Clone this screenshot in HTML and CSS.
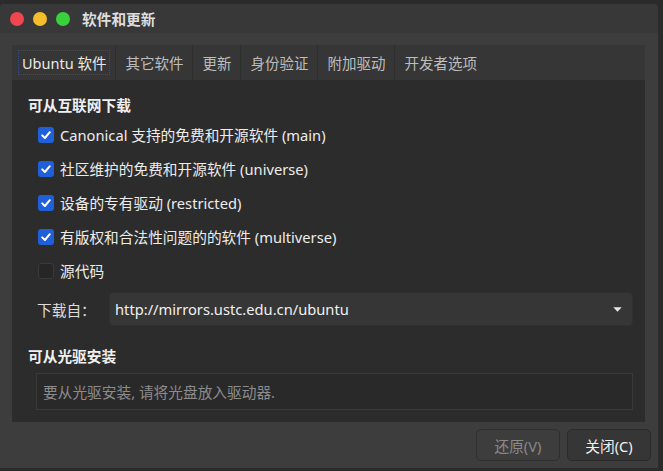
FILE: index.html
```html
<!DOCTYPE html>
<html lang="zh-CN">
<head>
<meta charset="utf-8">
<title>软件和更新</title>
<link rel="stylesheet" href="styles.css">
</head>
<body>
<div class="window">
  <div class="titlebar">
    <span class="light red"></span>
    <span class="light yellow"></span>
    <span class="light green"></span>
    <span class="title">软件和更新</span>
  </div>
  <div class="body">
    <div class="notebook">
      <div class="tabs">
        <div class="tab active"><span class="focus">Ubuntu 软件</span></div>
        <div class="tab">其它软件</div>
        <div class="tab">更新</div>
        <div class="tab">身份验证</div>
        <div class="tab">附加驱动</div>
        <div class="tab last">开发者选项</div>
      </div>
      <div class="page">
        <div class="heading">可从互联网下载</div>
        <div class="checks">
          <div class="row"><span class="cb on"><svg viewBox="0 0 16 16" width="16" height="16"><path d="M4.2 8.4 L6.9 11 L11.8 5.2" fill="none" stroke="#fff" stroke-width="2" stroke-linecap="round" stroke-linejoin="round"/></svg></span><span class="lbl">Canonical 支持的免费和开源软件 (main)</span></div>
          <div class="row"><span class="cb on"><svg viewBox="0 0 16 16" width="16" height="16"><path d="M4.2 8.4 L6.9 11 L11.8 5.2" fill="none" stroke="#fff" stroke-width="2" stroke-linecap="round" stroke-linejoin="round"/></svg></span><span class="lbl">社区维护的免费和开源软件 (universe)</span></div>
          <div class="row"><span class="cb on"><svg viewBox="0 0 16 16" width="16" height="16"><path d="M4.2 8.4 L6.9 11 L11.8 5.2" fill="none" stroke="#fff" stroke-width="2" stroke-linecap="round" stroke-linejoin="round"/></svg></span><span class="lbl">设备的专有驱动 (restricted)</span></div>
          <div class="row"><span class="cb on"><svg viewBox="0 0 16 16" width="16" height="16"><path d="M4.2 8.4 L6.9 11 L11.8 5.2" fill="none" stroke="#fff" stroke-width="2" stroke-linecap="round" stroke-linejoin="round"/></svg></span><span class="lbl">有版权和合法性问题的的软件 (multiverse)</span></div>
          <div class="row"><span class="cb"></span><span class="lbl">源代码</span></div>
        </div>
        <div class="source">
          <span class="src-label">下载自：</span>
          <div class="combo">
            <span>http://mirrors.ustc.edu.cn/ubuntu</span>
            <svg class="arrow" viewBox="0 0 9 5" width="9" height="5"><path d="M0.3 0.3 H8.7 L4.5 4.7 Z" fill="#e8e8e8"/></svg>
          </div>
        </div>
        <div class="heading h2">可从光驱安装</div>
        <div class="cdbox">要从光驱安装, 请将光盘放入驱动器.</div>
      </div>
    </div>
    <div class="buttons">
      <button class="btn disabled">还原(V)</button>
      <button class="btn">关闭(C)</button>
    </div>
  </div>
</div>
</body>
</html>
```
FILE: styles.css
```css
html, body {
  margin: 0;
  padding: 0;
}
body {
  width: 663px;
  height: 471px;
  background: #2b2b2b;
  font-family: "Noto Sans", "Noto Sans CJK SC", sans-serif;
  font-size: 14.7px;
  color: #e6e6e6;
  overflow: hidden;
}
.window {
  margin-top: 4px;
  width: 658px;
  height: 464px;
  background: #3d3d3d;
  display: flex;
  flex-direction: column;
  border-radius: 4px 4px 0 0;
  overflow: hidden;
}
.titlebar {
  height: 29px;
  background: #383838;
  display: flex;
  align-items: center;
  padding-left: 10px;
  gap: 9px;
  flex: none;
}
.light {
  width: 14px;
  height: 14px;
  border-radius: 50%;
  display: block;
}
.red { background: #f0464f; }
.yellow { background: #f5bd2a; }
.green { background: #38d13c; }
.title {
  margin-left: 3px;
  font-weight: bold;
  color: #dedede;
  font-size: 14.7px;
  line-height: 20px;
  font-family: "Noto Sans CJK SC", sans-serif;
}
.body {
  flex: 1;
  display: flex;
  flex-direction: column;
  padding: 12px 13px 7px 12px;
  min-height: 0;
}
.notebook {
  flex: 1;
  display: flex;
  flex-direction: column;
  min-height: 0;
}
.tabs {
  height: 35px;
  background: #363636;
  display: flex;
  flex: none;
}
.tab {
  display: flex;
  align-items: center;
  padding: 0 9px;
  border-right: 1px solid #2e2e2e;
  color: #bdbdbd;
  line-height: 20px;
  font-size: 14.5px;
}
.tab.last { border-right: none; }
.tab.active {
  color: #e8e8e8;
  padding: 0 5px 0 6px;
}
.focus {
  display: flex;
  align-items: center;
  height: 23px;
  padding: 0 3px;
  border: 1px dotted #3b4c72;
}
.page {
  flex: 1;
  background: #2c2c2c;
  padding: 14px 12px 0 16px;
  display: flex;
  flex-direction: column;
}
.heading {
  font-weight: bold;
  color: #f0f0f0;
  line-height: 22px;
  font-family: "Noto Sans CJK SC", sans-serif;
}
.checks {
  margin-left: 10px;
  margin-top: 2px;
  display: flex;
  flex-direction: column;
}
.row {
  height: 34px;
  display: flex;
  align-items: center;
  gap: 6px;
}
.cb {
  width: 16px;
  height: 16px;
  border-radius: 3px;
  box-sizing: border-box;
  background: #262626;
  border: 1px solid #3a3a3a;
  display: block;
  flex: none;
}
.cb.on {
  background: #1f5fd9;
  border: none;
}
.cb svg { display: block; }
.lbl {
  line-height: 20px;
  color: #ececec;
}
.source {
  margin-top: 4px;
  display: flex;
  align-items: center;
}
.src-label {
  margin-left: 9px;
  width: 72px;
  color: #dcdcdc;
}
.combo {
  flex: 1;
  height: 34px;
  box-sizing: border-box;
  background: #363636;
  border: 1px solid #303030;
  border-radius: 4px;
  display: flex;
  align-items: center;
  justify-content: space-between;
  padding: 0 10px 0 5px;
  color: #f0f0f0;
}
.arrow { display: block; }
.h2 {
  margin-top: 19px;
}
.cdbox {
  margin-top: 6px;
  margin-left: 8px;
  height: 37px;
  box-sizing: border-box;
  border: 1px solid #3a3a3a;
  background: #292929;
  color: #8c8c8c;
  display: flex;
  align-items: center;
  padding-left: 6px;
}
.buttons {
  display: flex;
  justify-content: flex-end;
  gap: 7px;
  margin-top: 7px;
  margin-right: -6px;
  flex: none;
}
.btn {
  height: 32px;
  box-sizing: border-box;
  border-radius: 5px;
  border: 1px solid #2a2a2a;
  background: #363636;
  color: #f0f0f0;
  font-family: "Noto Sans", "Noto Sans CJK SC", sans-serif;
  font-size: 14.7px;
  padding: 0 16px;
  min-width: 84px;
}
.btn.disabled {
  background: #3d3d3d;
  color: #8a8a8a;
  border-color: #2f2f2f;
}
```
